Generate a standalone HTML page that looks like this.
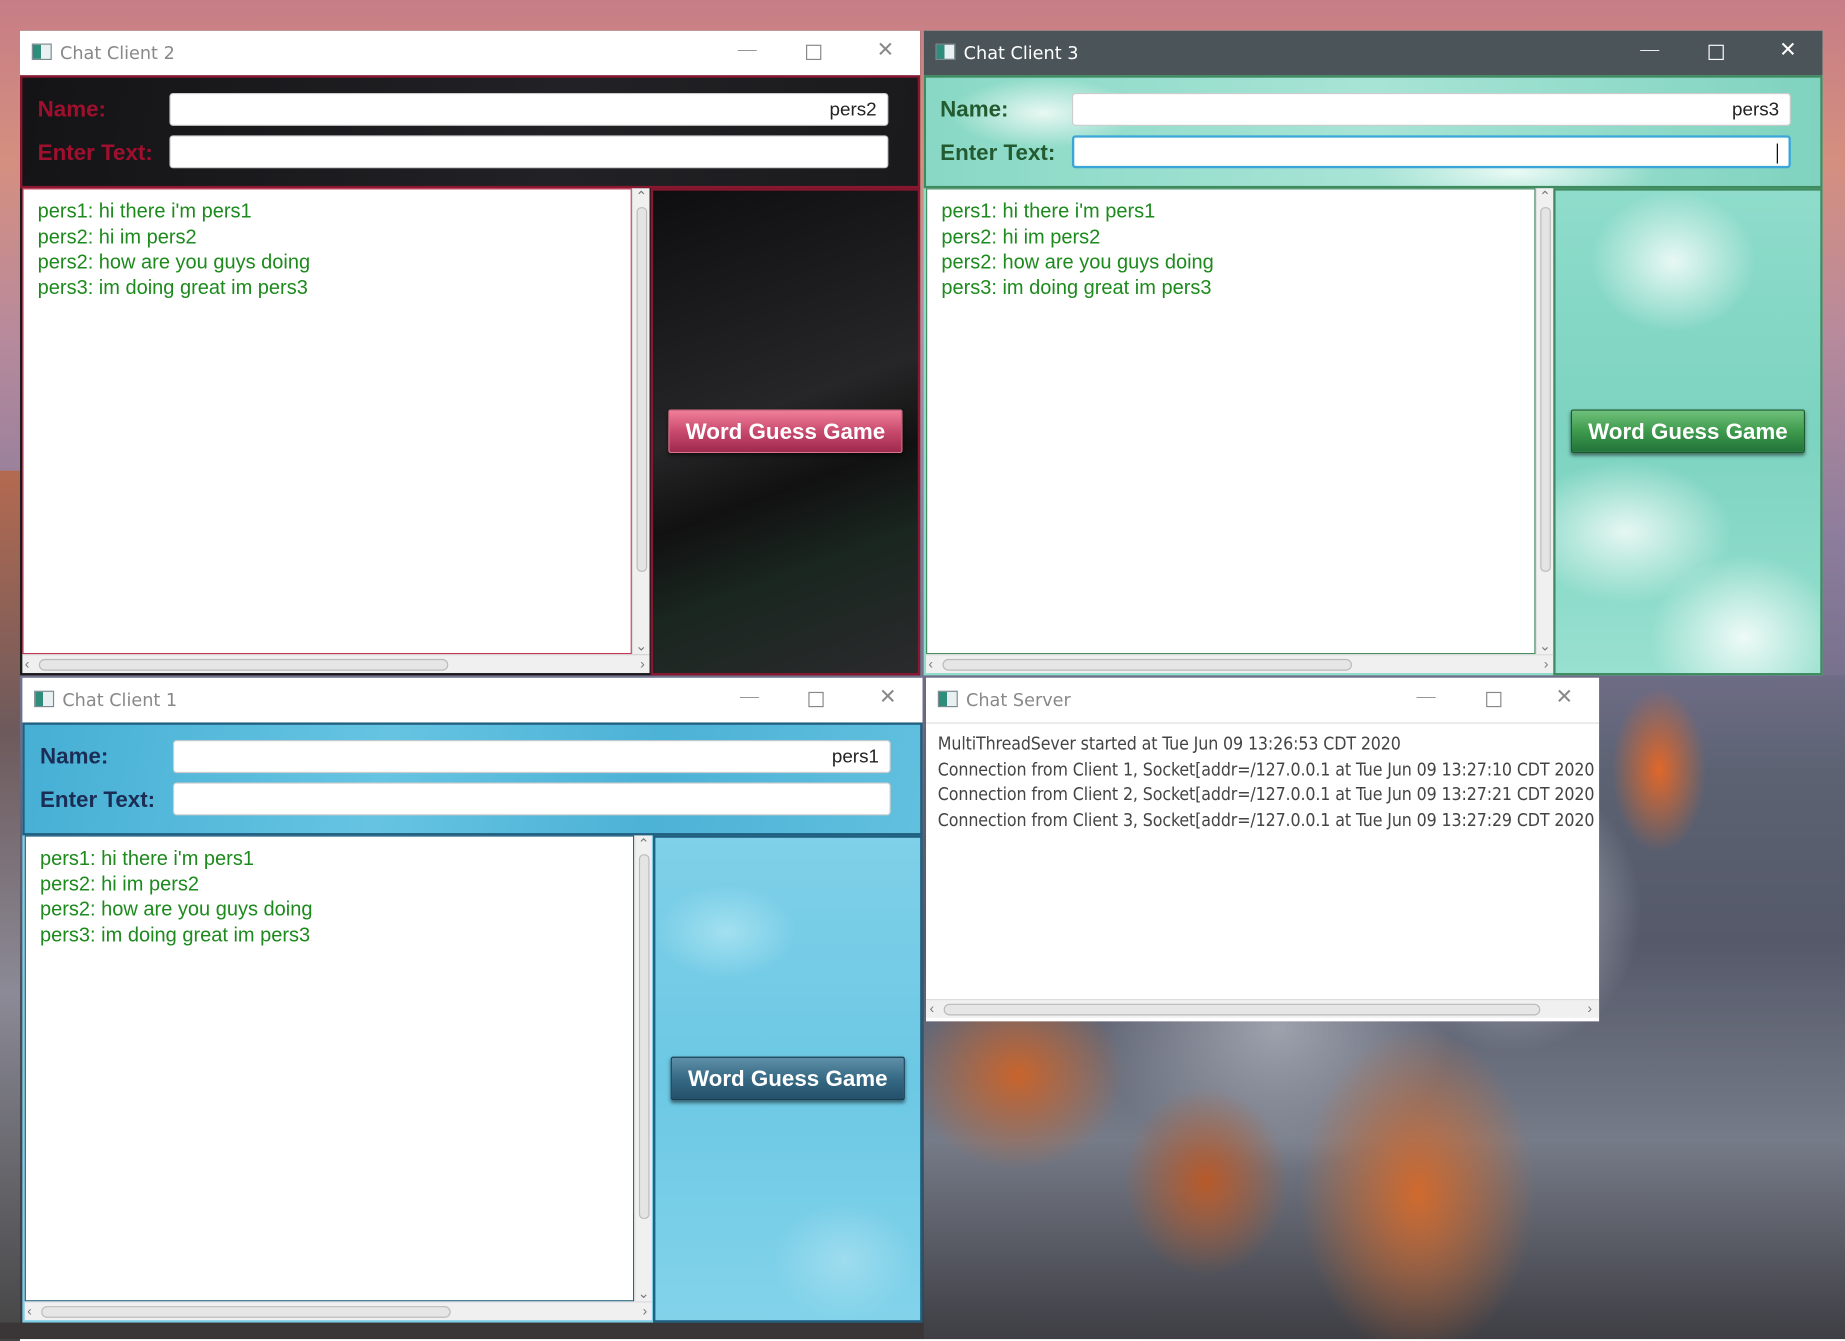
<!DOCTYPE html>
<html><head><meta charset="utf-8"><style>
*{box-sizing:border-box;margin:0;padding:0}
html,body{width:1845px;height:1339px;overflow:hidden}
#s{position:absolute;left:0;top:0;width:1568px;height:1138px;transform:scale(1.17666);transform-origin:0 0;
background:linear-gradient(180deg,#c77d86 0%,#d58f7f 12%,#b88a9c 25%,#8d7d9c 40%,#6e6c86 55%,#4b4c58 75%,#3c3a40 100%);font-family:"Liberation Sans",sans-serif}
.abs{position:absolute}
.win{position:absolute;overflow:hidden}
.tb{position:absolute;left:0;right:0;top:0;height:38px;background:#fff;font-size:15px;color:#888;font-family:"DejaVu Sans","Liberation Sans",sans-serif}
.tb .ic{position:absolute;left:10px;top:11px;width:17px;height:14px;border:1px solid #7a8a90;background:linear-gradient(90deg,#2f8d7c 0 45%,#e8f0f2 45%)}
.tb .t{position:absolute;left:34px;top:10px}
.tb .c{position:absolute;top:6px;font-size:18px;font-weight:300}
.lbl{position:absolute;font-weight:bold;font-size:19px}
.inp{position:absolute;background:#fff;border:1px solid #ccc;border-radius:3px;height:28px;font-size:16px;text-align:right;padding:5px 9px;color:#222}
.chat{position:absolute;background:#fff;font-size:17px;color:#1c8a1c;line-height:21.7px;padding:8px 12px}
.vs{position:absolute;width:15px;background:#f0f0f0;border-left:1px solid #ddd}
.vs i{position:absolute;left:3px;width:9px;border:1px solid #bbb;border-radius:4px;background:#e4e4e4}
.hs{position:absolute;height:16px;background:#f0f0f0;border-top:1px solid #ddd}
.hs i{position:absolute;top:3px;height:10px;border:1px solid #bbb;border-radius:5px;background:#e6e6e6}
.btn{position:absolute;width:199px;height:37px;color:#fff;font-weight:bold;font-size:19px;text-align:center;line-height:37px;box-shadow:0 2px 3px rgba(0,0,0,.5);border-radius:2px}
.arr{position:absolute;font-size:12px;color:#777}
</style></head><body><div id="s">
<!-- mountains -->
<div class="abs" style="left:0;top:400px;width:17px;height:740px;background:linear-gradient(180deg,#b46a50,#6d5a5c 30%,#8b8a96 60%,#444 100%)"></div>
<div class="abs" style="left:785px;top:574px;width:783px;height:564px;background:radial-gradient(ellipse 40px 70px at 625px 80px,#e0672a,transparent),radial-gradient(ellipse 110px 120px at 500px 200px,#b8bcc6,transparent),radial-gradient(ellipse 90px 80px at 80px 340px,#c8642c,transparent),radial-gradient(ellipse 100px 140px at 420px 440px,#d06a2e,transparent),radial-gradient(ellipse 70px 80px at 240px 430px,#b85a2a,transparent),radial-gradient(ellipse 150px 120px at 300px 300px,#9ea2ad,transparent),linear-gradient(180deg,#6e6c86 0%,#5c6272 15%,#55596a 40%,#767b88 70%,#3e3e44 100%)"></div>
<div class="abs" style="left:0;top:1124px;width:785px;height:14px;background:#3a3638"></div>

<!-- Chat Client 2 -->
<div class="win" style="left:17px;top:26px;width:765px;height:548px;background:#1a1a1c">
 <div class="tb"><div class="ic"></div><div class="t">Chat Client 2</div><div class="c" style="left:609px">—</div><div class="c" style="left:668px;top:12px;width:13px;height:13px;border:1px solid #888"></div><div class="c" style="left:728px">✕</div></div>
 <div class="abs" style="left:0;top:38px;width:765px;height:96px;border:2px solid #8a1730;background:linear-gradient(100deg,#141416,#222226 60%,#1a1a1c)"></div>
 <div class="lbl" style="left:15px;top:57px;color:#a0102e">Name:</div>
 <div class="lbl" style="left:15px;top:94px;color:#a0102e">Enter Text:</div>
 <div class="inp" style="left:127px;top:53px;width:611px">pers2</div>
 <div class="inp" style="left:127px;top:89px;width:611px"></div>
 <div class="abs" style="left:536px;top:134px;width:229px;height:414px;border:2px solid #8a1730;background:linear-gradient(160deg,#0e0e10 0%,#262628 45%,#111 60%,#1a2620 75%,#2a2a2c 100%)"></div>
 <div class="chat" style="left:2px;top:134px;width:518px;height:396px;border:1px solid #c0304d">pers1: hi there i'm pers1<br>pers2: hi im pers2<br>pers2: how are you guys doing<br>pers3: im doing great im pers3</div>
 <div class="vs" style="left:520px;top:134px;height:396px"><i style="top:16px;height:310px"></i><span class="arr" style="left:2px;top:0">⌃</span><span class="arr" style="left:2px;bottom:0">⌄</span></div>
 <div class="hs" style="left:2px;top:530px;width:533px"><i style="left:14px;width:348px"></i><span class="arr" style="left:2px;top:0">‹</span><span class="arr" style="right:4px;top:0">›</span></div>
 <div class="btn" style="left:551px;top:322px;background:linear-gradient(180deg,#f07f99,#c94a6e 50%,#9e2a4e);border:1px solid #e0708c">Word Guess Game</div>
</div>

<!-- Chat Client 3 -->
<div class="win" style="left:785px;top:26px;width:764px;height:548px;background:#8fdccb">
 <div class="tb" style="background:#4b5458;color:#fff"><div class="ic"></div><div class="t">Chat Client 3</div><div class="c" style="left:608px">—</div><div class="c" style="left:667px;top:12px;width:13px;height:13px;border:1px solid #fff"></div><div class="c" style="left:727px">✕</div></div>
 <div class="abs" style="left:0;top:38px;width:764px;height:96px;border:2px solid #3f8a5e;background:radial-gradient(ellipse 80px 30px at 100px 30px,#e8f8f2,transparent),radial-gradient(ellipse 120px 30px at 500px 80px,#eafaf5,transparent),linear-gradient(90deg,#88d8c5,#a8e4d6,#7fd3bf)"></div>
 <div class="lbl" style="left:14px;top:57px;color:#235a30">Name:</div>
 <div class="lbl" style="left:14px;top:94px;color:#235a30">Enter Text:</div>
 <div class="inp" style="left:126px;top:53px;width:611px">pers3</div>
 <div class="inp" style="left:126px;top:89px;width:611px;border:2px solid #3aa6d8"><span style="display:inline-block;width:1px;height:17px;background:#000"></span></div>
 <div class="abs" style="left:535px;top:134px;width:229px;height:414px;border:2px solid #3f8a5e;background:radial-gradient(ellipse 70px 60px at 100px 60px,#e8f8f4,transparent),radial-gradient(ellipse 90px 60px at 60px 290px,#e6f7f2,transparent),radial-gradient(ellipse 80px 70px at 160px 380px,#eefaf6,transparent),linear-gradient(180deg,#8fdccb,#7cd3c0 50%,#98e0d0)"></div>
 <div class="chat" style="left:2px;top:134px;width:518px;height:396px;border:1px solid #3f8a5e">pers1: hi there i'm pers1<br>pers2: hi im pers2<br>pers2: how are you guys doing<br>pers3: im doing great im pers3</div>
 <div class="vs" style="left:520px;top:134px;height:396px"><i style="top:16px;height:310px"></i><span class="arr" style="left:2px;top:0">⌃</span><span class="arr" style="left:2px;bottom:0">⌄</span></div>
 <div class="hs" style="left:2px;top:530px;width:533px"><i style="left:14px;width:348px"></i><span class="arr" style="left:2px;top:0">‹</span><span class="arr" style="right:4px;top:0">›</span></div>
 <div class="btn" style="left:550px;top:322px;background:linear-gradient(180deg,#6fc07a,#3e9a4c 50%,#22733a);border:1px solid #1e5a2e">Word Guess Game</div>
</div>

<!-- Chat Client 1 -->
<div class="win" style="left:19px;top:576px;width:765px;height:548px;background:#7ecfe6">
 <div class="tb"><div class="ic"></div><div class="t">Chat Client 1</div><div class="c" style="left:609px">—</div><div class="c" style="left:668px;top:12px;width:13px;height:13px;border:1px solid #888"></div><div class="c" style="left:728px">✕</div></div>
 <div class="abs" style="left:0;top:38px;width:765px;height:96px;border:2px solid #1f5f80;background:linear-gradient(100deg,#46afd4,#66c4e2 40%,#4cb2d6 70%,#62c0df)"></div>
 <div class="lbl" style="left:15px;top:57px;color:#1b2d55">Name:</div>
 <div class="lbl" style="left:15px;top:94px;color:#1b2d55">Enter Text:</div>
 <div class="inp" style="left:128px;top:53px;width:610px">pers1</div>
 <div class="inp" style="left:128px;top:89px;width:610px"></div>
 <div class="abs" style="left:536px;top:134px;width:229px;height:414px;border:2px solid #1f5f80;background:radial-gradient(ellipse 60px 40px at 60px 80px,#a2e0f0,transparent),radial-gradient(ellipse 60px 50px at 160px 360px,#9edcee,transparent),linear-gradient(180deg,#7fd0e8,#6cc8e4 50%,#82d3ea)"></div>
 <div class="chat" style="left:2px;top:134px;width:518px;height:396px;border:1px solid #1f5f80">pers1: hi there i'm pers1<br>pers2: hi im pers2<br>pers2: how are you guys doing<br>pers3: im doing great im pers3</div>
 <div class="vs" style="left:520px;top:134px;height:396px"><i style="top:16px;height:310px"></i><span class="arr" style="left:2px;top:0">⌃</span><span class="arr" style="left:2px;bottom:0">⌄</span></div>
 <div class="hs" style="left:2px;top:530px;width:533px"><i style="left:14px;width:348px"></i><span class="arr" style="left:2px;top:0">‹</span><span class="arr" style="right:4px;top:0">›</span></div>
 <div class="btn" style="left:551px;top:322px;background:linear-gradient(180deg,#5f8fa8,#376a85 50%,#24506a);border:1px solid #1a3d52">Word Guess Game</div>
</div>

<!-- Chat Server -->
<div class="win" style="left:787px;top:576px;width:572px;height:292px;background:#fff">
 <div class="tb"><div class="ic"></div><div class="t">Chat Server</div><div class="c" style="left:416px">—</div><div class="c" style="left:476px;top:12px;width:13px;height:13px;border:1px solid #888"></div><div class="c" style="left:535px">✕</div></div>
 <div class="abs" style="left:0;top:38px;width:572px;height:1px;background:#ddd"></div>
 <div class="abs" style="left:10px;top:46px;font-size:15px;line-height:21.7px;color:#444;font-family:'DejaVu Sans Condensed','Liberation Sans Narrow','Liberation Sans',sans-serif;white-space:nowrap;letter-spacing:-0.1px">MultiThreadSever started at Tue Jun 09 13:26:53 CDT 2020<br>Connection from Client 1, Socket[addr=/127.0.0.1 at Tue Jun 09 13:27:10 CDT 2020<br>Connection from Client 2, Socket[addr=/127.0.0.1 at Tue Jun 09 13:27:21 CDT 2020<br>Connection from Client 3, Socket[addr=/127.0.0.1 at Tue Jun 09 13:27:29 CDT 2020</div>
 <div class="hs" style="left:0;top:273px;width:572px"><i style="left:15px;width:507px"></i><span class="arr" style="left:3px;top:0">‹</span><span class="arr" style="right:6px;top:0">›</span></div>
</div>
</div></body></html>
